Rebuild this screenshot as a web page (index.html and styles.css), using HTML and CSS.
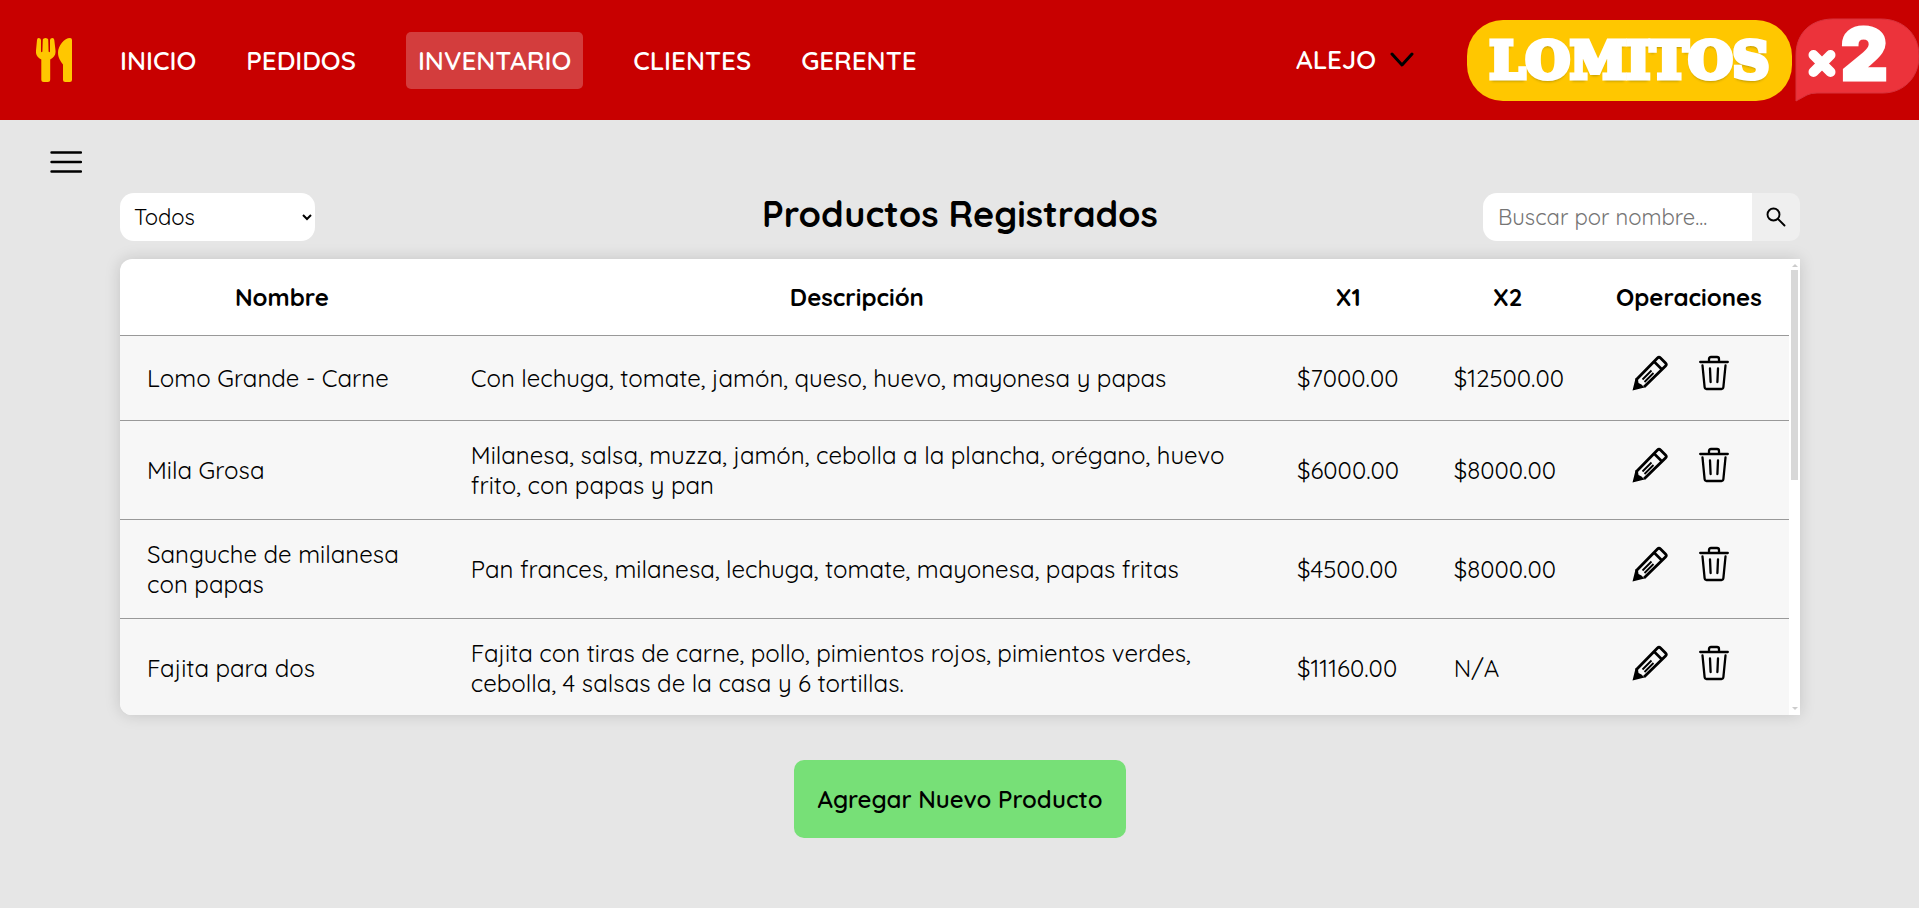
FILE: index.html
```html
<!DOCTYPE html>
<html lang="es">
<head>
<meta charset="utf-8">
<title>Lomitos x2 - Inventario</title>
<link rel="stylesheet" href="styles.css">
</head>
<body>
<svg class="sprite" aria-hidden="true">
  <symbol id="pencil" viewBox="0 0 36 36">
    <path d="M4 25 25.500 3Q27 1.500 28.500 3L33.500 8Q35 9.500 33.500 11L12 32" fill="none" stroke="currentColor" stroke-width="2.800" stroke-linejoin="round"/>
    <path d="M22 6.500 30 14.500" fill="none" stroke="currentColor" stroke-width="2.600"/>
    <path d="M19.500 15.500 10.500 24.500M21.500 18 12.500 27" fill="none" stroke="currentColor" stroke-width="1.800"/>
    <path d="M.5 35.500 3.500 23.500 6 24.500 6.500 28 9.500 29.500 12.500 32.500Z" fill="currentColor"/>
  </symbol>
  <symbol id="trash" viewBox="0 0 30 36">
    <path d="M1.200 7H28.800M10 6V4Q10 2 12 2H18Q20 2 20 4V6M3.500 10.500 5.600 32Q5.800 34 7.500 34H22.500Q24.200 34 24.400 32L26.500 10.500M11 13.500 11.600 27M19 13.500 18.400 27" fill="none" stroke="currentColor" stroke-width="2.300" stroke-linecap="round"/>
  </symbol>
</svg>

<header class="topbar">
  <a class="home" href="#" aria-label="Inicio">
    <svg viewBox="0 0 36 44" width="36" height="44" fill="#ffc700">
      <path d="M2.500 0Q4.800 0 5 2V13.500Q5.700 15 6.400 13.500L6.800 1.500Q7.200 0 9.500 0T12.200 1.500L12.600 13.500Q13.300 15 14 13.500V2Q14.200 0 16.500 0Q18 0 18.300 2L19.500 12.500C20 17 18 19.500 14.200 21.500V41.500Q14.200 44 11.700 44H7.800Q5.300 44 5.300 41.500V21.500C1.500 19.500-.5 17 0 12.500L1 2Q1.200 0 2.500 0Z"/>
      <path d="M34 0Q36 0 36 2V42Q36 44 33.800 44H29.200Q27 44 27 42V26.500C24.500 23 22 20 22 14.500C22 8 28.500 0 34 0Z"/>
    </svg>
  </a>
  <nav class="nav">
    <a href="#">INICIO</a>
    <a href="#">PEDIDOS</a>
    <a class="active" href="#">INVENTARIO</a>
    <a href="#">CLIENTES</a>
    <a href="#">GERENTE</a>
  </nav>
  <button class="user" type="button">ALEJO
    <svg viewBox="0 0 24 16" width="24" height="16" fill="none" stroke="#000" stroke-width="3" stroke-linecap="round" stroke-linejoin="round"><path d="M2 2 12 13 22 2"/></svg>
  </button>
  <div class="brand">
    <span class="brand-name">LOMITOS</span>
    <svg class="brand-bubble" viewBox="0 0 124 84" width="124" height="84">
      <path d="M1 83V37C1 15 16 1 38 1H86C108 1 124 16 124 38S108 75 88 75H22Q16 75 12 77Z" fill="#ec333b" stroke="#d8323c" stroke-width="1"/>
      <path d="M18.500 37 35.500 54M35.500 37 18.500 54" stroke="#fff" stroke-width="10" stroke-linecap="round"/>
      <text class="brand-two" x="46" y="62">2</text>
    </svg>
  </div>
</header>

<main class="page">
  <button class="menu" type="button" aria-label="Menú">
    <svg viewBox="0 0 32 24" width="32" height="24" stroke="#000" stroke-width="2.400" stroke-linecap="round"><path d="M1.500 2.500H31M1.500 12H31M1.500 21.500H31"/></svg>
  </button>
  <section class="content">
    <div class="toolbar">
      <div class="side">
        <select class="filter" aria-label="Categoría"><option>Todos</option></select>
      </div>
      <h1 class="title">Productos Registrados</h1>
      <form class="side search">
        <input type="text" placeholder="Buscar por nombre..." aria-label="Buscar por nombre">
        <button type="button" aria-label="Buscar">
          <svg viewBox="0 0 20 20" width="20" height="20" fill="none" stroke="#000" stroke-width="1.900" stroke-linecap="round"><circle cx="7.500" cy="7.500" r="6"/><path d="M12 12 18.500 18.500"/></svg>
        </button>
      </form>
    </div>

    <div class="card">
      <div class="scroller">
        <table class="products">
          <colgroup><col class="c-name"><col class="c-desc"><col class="c-x1"><col class="c-x2"><col class="c-ops"></colgroup>
          <thead>
            <tr><th>Nombre</th><th>Descripción</th><th>X1</th><th>X2</th><th>Operaciones</th></tr>
          </thead>
          <tbody>
            <tr>
              <td>Lomo Grande - Carne</td>
              <td>Con lechuga, tomate, jamón, queso, huevo, mayonesa y papas</td>
              <td>$7000.00</td><td>$12500.00</td>
              <td><div class="ops"><button type="button" aria-label="Editar"><svg width="36" height="36"><use href="#pencil"/></svg></button><button type="button" aria-label="Eliminar"><svg width="30" height="36"><use href="#trash"/></svg></button></div></td>
            </tr>
            <tr>
              <td>Mila Grosa</td>
              <td>Milanesa, salsa, muzza, jamón, cebolla a la plancha, orégano, huevo frito, con papas y pan</td>
              <td>$6000.00</td><td>$8000.00</td>
              <td><div class="ops"><button type="button" aria-label="Editar"><svg width="36" height="36"><use href="#pencil"/></svg></button><button type="button" aria-label="Eliminar"><svg width="30" height="36"><use href="#trash"/></svg></button></div></td>
            </tr>
            <tr>
              <td>Sanguche de milanesa con papas</td>
              <td>Pan frances, milanesa, lechuga, tomate, mayonesa, papas fritas</td>
              <td>$4500.00</td><td>$8000.00</td>
              <td><div class="ops"><button type="button" aria-label="Editar"><svg width="36" height="36"><use href="#pencil"/></svg></button><button type="button" aria-label="Eliminar"><svg width="30" height="36"><use href="#trash"/></svg></button></div></td>
            </tr>
            <tr>
              <td>Fajita para dos</td>
              <td>Fajita con tiras de carne, pollo, pimientos rojos, pimientos verdes, cebolla, 4 salsas de la casa y 6 tortillas.</td>
              <td>$11160.00</td><td>N/A</td>
              <td><div class="ops"><button type="button" aria-label="Editar"><svg width="36" height="36"><use href="#pencil"/></svg></button><button type="button" aria-label="Eliminar"><svg width="30" height="36"><use href="#trash"/></svg></button></div></td>
            </tr>
          </tbody>
        </table>
      </div>
      <div class="rail" aria-hidden="true">
        <span class="arrow up"></span>
        <span class="track"><span class="thumb"></span></span>
        <span class="arrow down"></span>
      </div>
    </div>

    <button class="add" type="button">Agregar Nuevo Producto</button>
  </section>
</main>
</body>
</html>
```
FILE: styles.css
```css
* { box-sizing: border-box; }

body {
  margin: 0;
  min-height: 100vh;
  background: #e6e6e6;
  color: #000;
  font-family: Quicksand, Lato, sans-serif;
  font-size: 24px;
  line-height: 30px;
}

button, input, select { font: inherit; color: inherit; border: 0; }
button { background: none; padding: 0; cursor: pointer; }
svg { display: block; }
.sprite { position: absolute; width: 0; height: 0; }

/* Top bar */
.topbar {
  display: flex;
  align-items: center;
  height: 120px;
  padding-left: 36px;
  background: #c80000;
  color: #fff;
}
.nav {
  display: flex;
  align-items: center;
  gap: 50px;
  margin-left: 48px;
}
.nav a {
  color: #fff;
  font-size: 26px;
  font-weight: 600;
  line-height: 33px;
  text-decoration: none;
}
.nav .active {
  padding: 12px;
  border-radius: 5px;
  background: #d33d3d;
}
.user {
  display: flex;
  align-items: center;
  gap: 14px;
  margin-left: auto;
  margin-right: 53px;
  font-size: 26px;
  font-weight: 600;
}
.brand {
  display: flex;
  align-items: center;
  gap: 3px;
}
.brand-name {
  width: 325px;
  border-radius: 36px;
  background: #ffc700;
  font-family: "DejaVu Serif", serif;
  font-size: 51px;
  font-weight: 700;
  line-height: 81px;
  text-align: center;
  -webkit-text-stroke: 5px #fff;
  text-shadow: 0 3px 3px #a88a00;
}
.brand-bubble { overflow: visible; }
.brand-two {
  fill: #fff;
  stroke: #fff;
  stroke-width: 3px;
  font-family: Inter, sans-serif;
  font-size: 72px;
  font-weight: 900;
}

/* Page */
.menu {
  display: block;
  padding: 30px 50px 0;
}
.content {
  display: flex;
  flex-direction: column;
  align-items: center;
  padding: 19px 119px 0 120px;
}
.toolbar {
  display: flex;
  align-items: center;
  width: 100%;
  height: 48px;
}
.side { display: flex; flex: 1; }
.filter {
  width: 195px;
  height: 48px;
  padding: 0 10px;
  border-radius: 14px;
  background: #fff;
  font-size: 22px;
}
.title {
  margin: 0 0 6px;
  font-size: 36px;
  font-weight: 700;
  line-height: 42px;
}
.search { justify-content: flex-end; }
.search input {
  width: 269px;
  height: 48px;
  padding: 0 15px;
  border-radius: 14px 0 0 14px;
  background: #fff;
  font-size: 22px;
}
.search input::placeholder { color: #757575; }
.search button {
  display: grid;
  place-items: center;
  width: 48px;
  height: 48px;
  border-radius: 0 10px 10px 0;
  background: #efefef;
}

/* Product table */
.card {
  display: flex;
  width: 100%;
  height: 456px;
  margin-top: 18px;
  border-radius: 12px 0 0 12px;
  background: #fff;
  box-shadow: 0 0 16px rgba(0, 0, 0, .15);
  overflow: hidden;
}
.scroller {
  flex: 1;
  overflow: auto;
  scrollbar-width: none;
}
.products {
  width: 100%;
  table-layout: fixed;
  border-collapse: separate;
  border-spacing: 0;
}
.c-name { width: 19.4%; }
.c-desc { width: 49.5%; }
.c-x1 { width: 9.4%; }
.c-x2 { width: 9.7%; }
.c-ops { width: 12%; }
.products th {
  height: 77px;
  padding: 0;
  border-bottom: 1px solid #999;
  font-weight: 700;
}
.products td {
  padding: 19px 27px;
  border-bottom: 1px solid #999;
  background: #f7f7f7;
}
.ops {
  display: flex;
  gap: 31px;
  padding: 0 0 10px 16px;
}
.rail {
  display: flex;
  flex-direction: column;
  align-items: center;
  width: 11px;
  padding: 5px 0;
}
.arrow {
  border: 3px solid transparent;
  border-top: 0;
  border-bottom-color: #ccc;
}
.arrow.down {
  border-top: 3px solid #ccc;
  border-bottom: 0;
}
.track { flex: 1; width: 7px; padding: 3px 0; }
.thumb { display: block; height: 210px; background: #d8d8d8; }

.add {
  height: 78px;
  margin-top: 45px;
  padding: 0 24px;
  border-radius: 10px;
  background: #77e077;
  font-weight: 600;
}
```
